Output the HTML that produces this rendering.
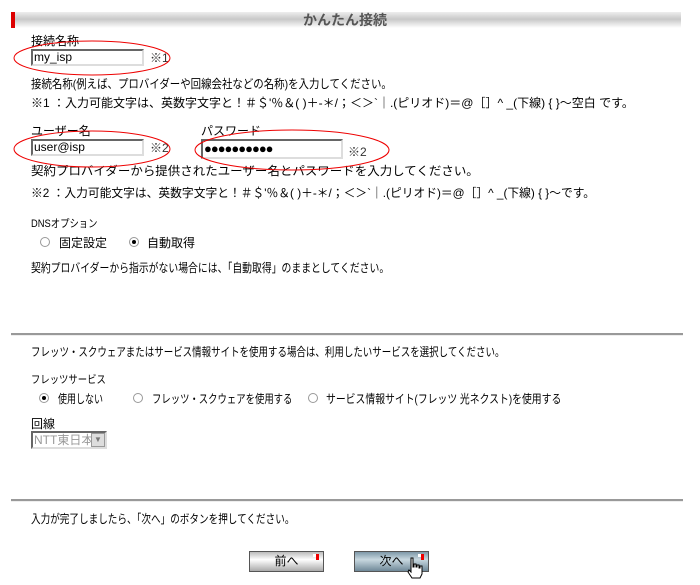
<!DOCTYPE html>
<html><head><meta charset="utf-8">
<style>
body{margin:0;width:700px;height:585px;background:#fff;position:relative;overflow:hidden;font-family:"Liberation Sans","Noto Sans CJK JP",sans-serif;font-size:12px;color:#000}
.t{position:absolute;white-space:nowrap;line-height:14px;transform-origin:0 0}
.in{position:absolute;box-sizing:border-box;background:#fff;border:2px solid;border-color:#666 #ddd #ddd #666;font-size:12px;line-height:13px;padding-left:1px}
.rad{position:absolute;width:10px;height:10px;border-radius:50%;border:1px solid #999;background:#fff;box-sizing:border-box}
.rad.on::after{content:"";position:absolute;left:2px;top:2px;width:4px;height:4px;border-radius:50%;background:#000}
.hr{position:absolute;left:11px;width:672px;height:2px;background:#999;border-bottom:1px solid #eee}
.btn{position:absolute;width:75px;height:21px;box-sizing:border-box;border:1px solid #555;text-align:center;line-height:19px;font-size:12px}
.btn i{position:absolute;right:4px;top:2px;width:3px;height:3px;background:#e00;box-shadow:-3px 0 0 #fff,0 3px 0 #e00}
</style></head><body>
<div style="position:absolute;left:11px;top:12px;width:670px;height:16px;background:linear-gradient(#eee,#c8c8c8 45%,#fff)"></div>
<div style="position:absolute;left:11px;top:12px;width:4px;height:16px;background:#d00"></div>
<div class="t" style="left:303px;top:12px;font-size:14px;font-weight:bold;color:#555;line-height:16px">かんたん接続</div>

<div class="t" style="left:31px;top:34px">接続名称</div>
<div class="in" style="left:31px;top:49px;width:113px;height:17px">my_isp</div>
<div class="t" style="left:150px;top:51px;color:#333">※1</div>
<div class="t" style="left:31px;top:77px;transform:scaleX(.87)">接続名称(例えば、プロバイダーや回線会社などの名称)を入力してください。</div>
<div class="t" style="left:31px;top:96px">※1 ：入力可能文字は、英数字文字と！＃＄'％＆( )＋-＊/；＜＞`｜.(ピリオド)＝@［］^ _(下線) { }～空白 です。</div>

<div class="t" style="left:31px;top:124px">ユーザー名</div>
<div class="in" style="left:31px;top:139px;width:113px;height:17px">user@isp</div>
<div class="t" style="left:150px;top:141px;color:#333">※2</div>
<div class="t" style="left:201px;top:124px">パスワード</div>
<div class="in" style="left:201px;top:139px;width:142px;height:20px;font-size:13px;letter-spacing:-1px;line-height:16px">●●●●●●●●●●</div>
<div class="t" style="left:348px;top:145px;color:#333">※2</div>
<div class="t" style="left:31px;top:164px;transform:scaleX(1.04)">契約プロバイダーから提供されたユーザー名とパスワードを入力してください。</div>
<div class="t" style="left:31px;top:186px;transform:scaleX(.98)">※2 ：入力可能文字は、英数字文字と！＃＄'％＆( )＋-＊/；＜＞`｜.(ピリオド)＝@［］^ _(下線) { }～です。</div>

<svg style="position:absolute;left:0;top:0" width="700" height="200">
<ellipse cx="92" cy="58" rx="78" ry="17" fill="none" stroke="#e00" stroke-width="1"/>
<ellipse cx="92" cy="149" rx="78" ry="18" fill="none" stroke="#e00" stroke-width="1"/>
<ellipse cx="292" cy="150" rx="97" ry="20" fill="none" stroke="#e00" stroke-width="1"/>
</svg>

<div class="t" style="left:31px;top:217px;font-size:11px;transform:scaleX(.85)">DNSオプション</div>
<div class="rad" style="left:40px;top:237px"></div>
<div class="t" style="left:59px;top:236px">固定設定</div>
<div class="rad on" style="left:129px;top:237px"></div>
<div class="t" style="left:147px;top:236px">自動取得</div>
<div class="t" style="left:31px;top:261px;transform:scaleX(.82)">契約プロバイダーから指示がない場合には、「自動取得」のままとしてください。</div>

<div class="hr" style="top:333px"></div>
<div class="t" style="left:31px;top:345px;transform:scaleX(.79)">フレッツ・スクウェアまたはサービス情報サイトを使用する場合は、利用したいサービスを選択してください。</div>
<div class="t" style="left:31px;top:373px;font-size:11px;transform:scaleX(.85)">フレッツサービス</div>
<div class="rad on" style="left:39px;top:393px"></div>
<div class="t" style="left:58px;top:392px;transform:scaleX(.75)">使用しない</div>
<div class="rad" style="left:133px;top:393px"></div>
<div class="t" style="left:152px;top:392px;transform:scaleX(.78)">フレッツ・スクウェアを使用する</div>
<div class="rad" style="left:308px;top:393px"></div>
<div class="t" style="left:326px;top:392px;transform:scaleX(.82)">サービス情報サイト(フレッツ 光ネクスト)を使用する</div>
<div class="t" style="left:31px;top:417px">回線</div>
<div class="in" style="left:31px;top:431px;width:76px;height:18px;color:#999;line-height:14px">NTT東日本<span style="position:absolute;right:0;top:0;width:14px;height:14px;background:#ddd;border:1px solid #999;box-sizing:border-box;font-size:8px;line-height:12px;text-align:center;color:#777">▼</span></div>

<div class="hr" style="top:499px"></div>
<div class="t" style="left:31px;top:512px;transform:scaleX(.8)">入力が完了しましたら、「次へ」のボタンを押してください。</div>

<div class="btn" style="left:249px;top:551px;background:linear-gradient(#bbb,#fff 40%,#aaa)">前へ<i></i></div>
<div class="btn" style="left:354px;top:551px;background:linear-gradient(#7e98a8,#c8d8e0 40%,#6f8898)">次へ<i></i></div>
<svg style="position:absolute;left:406px;top:557px" width="20" height="24" viewBox="0 0 20 24"><path d="M5 1h2v9h1V7h2v3h1V8h2v3h1V9h2v8l-2 4H6L2 15l1-2 2 2z" fill="#fff" stroke="#000" stroke-width="1"/></svg>
</body></html>
